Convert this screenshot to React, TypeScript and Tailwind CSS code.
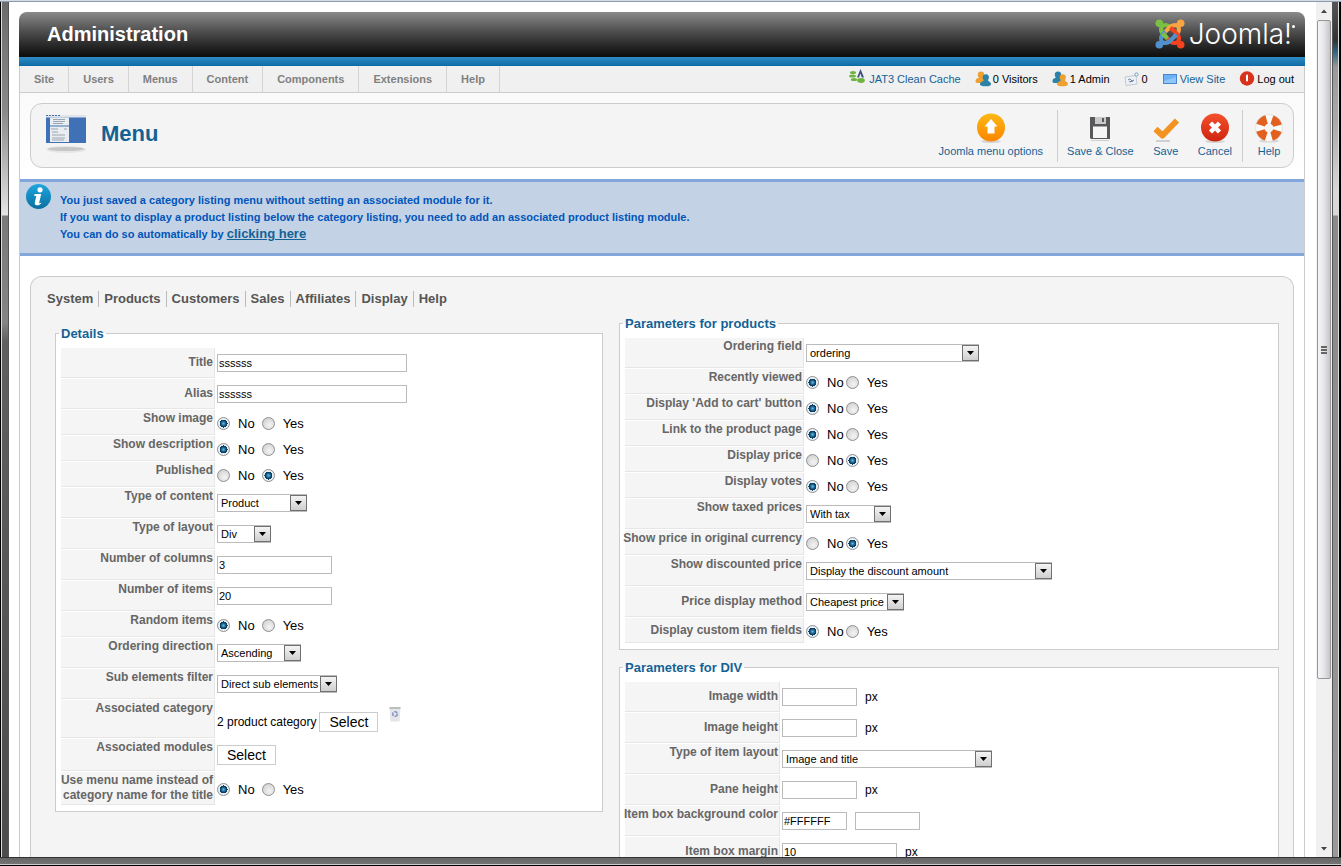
import { useId } from "react";

type Choice = "No" | "Yes";

const menuItems = ["Site", "Users", "Menus", "Content", "Components", "Extensions", "Help"];
const submenuItems = ["System", "Products", "Customers", "Sales", "Affiliates", "Display", "Help"];

const JoomlaMark = () => {
    const arms = [
        { color: "#7ac143", angle: 0 },
        { color: "#f9a541", angle: 90 },
        { color: "#f44321", angle: 180 },
        { color: "#5091cd", angle: 270 },
    ];
    return (
        <svg className="h-[30px] w-[30px]" viewBox="0 0 30 30" fill="none" aria-hidden="true">
            {arms.map(({ color, angle }) => (
                <g key={color} transform={`rotate(${angle} 15 15)`}>
                    <circle cx="4.3" cy="4.3" r="3.8" fill={color} />
                    <path d="M5 5 L8 6.5 C11 5.5 13 6 15 8 L17.500 10.500" stroke={color} strokeWidth="4" />
                    <path d="M5 5 L6.500 8 C5.5 11 6 13 8 15 L14.500 21.500" stroke={color} strokeWidth="4.2" />
                </g>
            ))}
            <path d="M7.500 14.500 L11.500 18.500" stroke="#7ac143" strokeWidth="4.2" />
        </svg>
    );
};

const CacheIcon = () => (
    <svg className="h-4 w-4" viewBox="0 0 16 16" aria-hidden="true">
        <g fill="#6cb33f">
            <ellipse cx="4" cy="4.5" rx="3" ry="1.6" />
            <ellipse cx="3.5" cy="8" rx="3.4" ry="1.6" />
            <ellipse cx="5" cy="11.5" rx="3.2" ry="1.6" />
            <ellipse cx="12" cy="12.5" rx="3.8" ry="2.4" />
        </g>
        <path d="M8 9.5 L11.5 1 L15 9.5 H12.8 L11.4 5.5 L10 9.5Z" fill="#3b4f80" />
    </svg>
);

const PeopleIcon = ({ back, front }: { back: string; front: string }) => (
    <svg className="h-4 w-4" viewBox="0 0 16 16" aria-hidden="true">
        <g fill={back}>
            <circle cx="6" cy="3.8" r="3.2" />
            <path d="M0.500 10 C0.500 7 4 7.5 4.200 5.5 H8 L10 9 V12 H2 C1 12 0.500 11 0.500 10Z" />
        </g>
        <g fill={front}>
            <circle cx="10.800" cy="6.4" r="3.1" />
            <path d="M5 13 C5 10.5 8.700 11 9 8.5 H12.7 C13 11 16 10.5 16 13 C16 15 14 15.200 10.8 15.200 C7.5 15.200 5 15 5 13Z" />
        </g>
    </svg>
);

const MailIcon = () => (
    <svg className="h-4 w-4" viewBox="0 0 16 16" aria-hidden="true">
        <path d="M1 6 L12 4.5 L13 13 L2 14.5Z" fill="#eef2f6" stroke="#c3c9cf" />
        <path d="M4 9 q2 -2 3 0 t3 0 M5 11 l4 -1" stroke="#5b7fa0" fill="none" />
        <circle cx="12.5" cy="3.5" r="1.6" fill="#fff" stroke="#6a9ccc" />
    </svg>
);

const ScreenIcon = () => (
    <svg className="h-4 w-4" viewBox="0 0 16 16" aria-hidden="true">
        <rect x="1.5" y="3.5" width="13" height="9" fill="#6db2f7" stroke="#4a86d0" />
        <path d="M2 10 L14 6 V12 H2Z" fill="#8fc6fb" />
    </svg>
);

const LogoutIcon = () => (
    <svg className="h-4 w-4" viewBox="0 0 16 16" aria-hidden="true">
        <circle cx="8" cy="7.500" r="7.2" fill="#d8321a" />
        <rect x="7" y="3.5" width="2" height="7" rx="1" fill="#fff" />
    </svg>
);

const MenuPageIcon = () => (
    <svg className="h-10 w-[42px]" viewBox="0 0 42 40" aria-hidden="true">
        <rect x="1" y="1" width="40" height="28" fill="#4070b5" />
        <rect x="1" y="1" width="40" height="2.5" fill="#dfe3ea" />
        <rect x="5" y="3.5" width="19" height="8" fill="#e9edf2" />
        <rect x="5" y="12.5" width="19" height="15.5" fill="#e9edf2" />
        <path d="M8 5.5h12M8 7.5h12M8 9.5h10M6 15h7M19 15h3M7 18h6M7 21h13M7 24h13M7 26h12" stroke="#9aa4b2" />
        <path d="M1 1.5h14" stroke="#4a6fa5" strokeDasharray="2 1" />
        <ellipse cx="21" cy="35" rx="18" ry="2" fill="#c6c6c6" />
        <ellipse cx="21" cy="35.5" rx="20" ry="3.5" fill="#c6c6c6" opacity="0.3" />
    </svg>
);

const OptionsIcon = () => (
    <svg className="h-8 w-8" viewBox="0 0 32 32" aria-hidden="true">
        <defs>
            <linearGradient id="orange" x1="0" y1="0" x2="0" y2="1">
                <stop offset="0" stopColor="#fdb813" />
                <stop offset="1" stopColor="#fb8500" />
            </linearGradient>
        </defs>
        <ellipse cx="16" cy="29.5" rx="10" ry="1.6" fill="#d6d6d6" />
        <circle cx="16" cy="15.5" r="14" fill="url(#orange)" />
        <path d="M16 7 L22.5 14.5 H19.5 V21.5 H12.5 V14.5 H9.5Z" fill="#fff" />
    </svg>
);

const FloppyIcon = () => (
    <svg className="h-8 w-8" viewBox="0 0 32 32" aria-hidden="true">
        <path d="M6 5 H26 V27 H7 L6 26Z" fill="#58585a" />
        <rect x="11" y="5" width="11" height="7" fill="#c9c9cb" />
        <rect x="18" y="6" width="2" height="4" fill="#58585a" />
        <rect x="9" y="14.5" width="14" height="11.5" fill="#f6f6f6" />
        <path d="M7 28.5h18" stroke="#d0d0d0" />
    </svg>
);

const CheckIcon = () => (
    <svg className="h-8 w-8" viewBox="0 0 32 32" aria-hidden="true">
        <path d="M6 29 H20" stroke="#cfcfcf" strokeWidth="2" />
        <path d="M5.500 17 L12.500 23.500 L27 8.500" stroke="#f39322" strokeWidth="6" strokeLinejoin="round" fill="none" />
    </svg>
);

const CancelIcon = () => (
    <svg className="h-8 w-8" viewBox="0 0 32 32" aria-hidden="true">
        <defs>
            <linearGradient id="red" x1="0" y1="0" x2="0" y2="1">
                <stop offset="0" stopColor="#f4512c" />
                <stop offset="1" stopColor="#cf2410" />
            </linearGradient>
        </defs>
        <ellipse cx="16" cy="29.5" rx="10" ry="1.6" fill="#d6d6d6" />
        <circle cx="16" cy="15.500" r="14" fill="url(#red)" />
        <path d="M11.500 11 L20.500 20 M20.500 11 L11.500 20" stroke="#fff" strokeWidth="4.500" />
    </svg>
);

const LifebuoyIcon = () => (
    <svg className="h-8 w-8" viewBox="0 0 32 32" aria-hidden="true">
        <ellipse cx="16" cy="29" rx="10" ry="1.6" fill="#d6d6d6" />
        <circle cx="16" cy="16" r="9" fill="none" stroke="#fafafa" strokeWidth="9" />
        <circle cx="16" cy="16" r="9" fill="none" stroke="#e2601f" strokeWidth="9" strokeDasharray="8.600 5.537" strokeDashoffset="-2.770" />
        <circle cx="16" cy="16" r="13.500" fill="none" stroke="#dcd5d0" strokeWidth="0.600" />
    </svg>
);

const InfoIcon = () => (
    <svg className="h-[26px] w-[26px] shrink-0" viewBox="0 0 26 26" aria-hidden="true">
        <defs>
            <linearGradient id="blue" x1="0" y1="0" x2="0" y2="1">
                <stop offset="0" stopColor="#1fa6df" />
                <stop offset="1" stopColor="#0a6f9f" />
            </linearGradient>
        </defs>
        <circle cx="12.500" cy="12.500" r="12.500" fill="url(#blue)" />
        <circle cx="14" cy="5.800" r="2.600" fill="#fff" />
        <path d="M8.500 10 H15.200 L13.200 18.500 C13 19.600 14 19.500 15.500 18.500 C14.500 22 8 22.500 8.800 18.500 L10.300 12 H8.300Z" fill="#fff" />
    </svg>
);

const TrashIcon = () => (
    <svg className="h-4 w-3" viewBox="0 0 12 16" aria-hidden="true">
        <path d="M0.500 1 H11.500 L10.500 15.500 H1.500Z" fill="#e3e5e8" />
        <path d="M0.500 1 H11.500 V3 H0.600Z" fill="#b9c0ba" />
        <circle cx="6" cy="8" r="2.300" fill="none" stroke="#8494c8" strokeWidth="1.500" strokeDasharray="3.500 1" />
    </svg>
);

const Row = ({ label, htmlFor, labelWidth, size = "h-[30px]", align = "items-start pt-px", children }: {
    label: string;
    htmlFor?: string;
    labelWidth: string;
    size?: string;
    align?: string;
    children: React.ReactNode;
}) => (
    <div className={`mb-px flex ${size}`}>
        <div className={`mr-0.5 flex shrink-0 justify-end border-r border-b border-[#e6e6e6] bg-[#f5f5f5] pr-px text-right ${labelWidth} ${align}`}>
            <label htmlFor={htmlFor} className="text-xs leading-[15px] font-bold whitespace-pre text-[#666]">{label}</label>
        </div>
        <div className="flex items-center">{children}</div>
    </div>
);

const inputStyle = "h-[18px] border border-[#bbb] bg-white px-px text-[11px] text-black";

const TextRow = ({ label, value = "", width, unit, align, labelWidth }: {
    label: string;
    value?: string;
    width: string;
    unit?: string;
    align?: string;
    labelWidth: string;
}) => {
    const id = useId();
    return (
        <Row label={label} htmlFor={id} align={align} labelWidth={labelWidth}>
            <input id={id} type="text" defaultValue={value} className={`${inputStyle} ${width}`} />
            {unit && <span className="ml-2 text-xs text-black">{unit}</span>}
        </Row>
    );
};

const SelectRow = ({ label, value, width, align, labelWidth }: {
    label: string;
    value: string;
    width: string;
    align?: string;
    labelWidth: string;
}) => {
    const id = useId();
    return (
        <Row label={label} htmlFor={id} align={align} labelWidth={labelWidth}>
            <div className={`relative ${width}`}>
                <select id={id} className="block h-[18px] w-full appearance-none border border-[#bbb] bg-white pl-[3px] text-[11px] text-black">
                    <option>{value}</option>
                </select>
                <span className="pointer-events-none absolute top-px right-0 flex h-4 w-[17px] items-center justify-center border border-[#707070] bg-linear-to-b from-[#f4f4f4] to-[#cfcfcf]">
                    <svg className="h-1 w-[7px]" viewBox="0 0 7 4" aria-hidden="true">
                        <path d="M0 0 H7 L3.5 4Z" fill="#000" />
                    </svg>
                </span>
            </div>
        </Row>
    );
};

const RadioRow = ({ label, value, gap = "ml-0.5", size = "h-[25px]", align, labelWidth }: {
    label: string;
    value: Choice;
    gap?: string;
    size?: string;
    align?: string;
    labelWidth: string;
}) => {
    const name = useId();
    const radio =
        "mr-2 size-[13px] appearance-none rounded-full border border-[#8e8f8f] bg-[radial-gradient(circle_at_60%_65%,#f4f4f4,#c9c9c9)] checked:bg-[radial-gradient(circle_at_50%_50%,#6bb8dd_0,#1c6a97_2px,#0c3f63_3px,#0c3f63_4px,#e8eef2_4px)]";
    return (
        <Row label={label} size={size} align={align} labelWidth={labelWidth}>
            <div role="radiogroup" aria-label={label} className="flex items-center pt-0.5 text-[13px] text-black">
                <label className="flex items-center">
                    <input type="radio" name={name} defaultChecked={value === "No"} className={radio} />
                    No
                </label>
                <label className={`flex items-center ${gap}`}>
                    <input type="radio" name={name} defaultChecked={value === "Yes"} className={radio} />
                    Yes
                </label>
            </div>
        </Row>
    );
};

const Panel = ({ title, className = "", children }: { title: string; className?: string; children: React.ReactNode }) => (
    <fieldset className={`border border-[#ccc] bg-white px-[5px] pb-[5px] ${className}`}>
        <legend className="-ml-0.5 px-0.5 text-[13px] leading-[15px] font-bold text-[#146295]">{title}</legend>
        <div className="pt-[7px]">{children}</div>
    </fieldset>
);

const selectButton = "h-5 border border-[#ccc] bg-white px-[9px] text-sm leading-[18px] text-black";

const Details = () => {
    const w = "w-[154px]";
    return (
        <Panel title="Details">
            <TextRow labelWidth={w} label="Title" value="ssssss" width="w-[190px]" align="items-center" />
            <TextRow labelWidth={w} label="Alias" value="ssssss" width="w-[190px]" align="items-center" />
            <RadioRow labelWidth={w} label="Show image" value="No" gap="ml-[7px]" />
            <RadioRow labelWidth={w} label="Show description" value="No" gap="ml-[7px]" />
            <RadioRow labelWidth={w} label="Published" value="Yes" gap="ml-[7px]" />
            <SelectRow labelWidth={w} label="Type of content" value="Product" width="w-[90px]" />
            <SelectRow labelWidth={w} label="Type of layout" value="Div" width="w-[54px]" />
            <TextRow labelWidth={w} label="Number of columns" value="3" width="w-[115px]" />
            <TextRow labelWidth={w} label="Number of items" value="20" width="w-[115px]" />
            <RadioRow labelWidth={w} label="Random items" value="No" gap="ml-[7px]" />
            <SelectRow labelWidth={w} label="Ordering direction" value="Ascending" width="w-[84px]" />
            <SelectRow labelWidth={w} label="Sub elements filter" value="Direct sub elements" width="w-[120px]" />
            <Row labelWidth={w} label="Associated category" htmlFor="category" size="h-[38px]">
                <div className="flex items-center pt-1.5">
                    <span className="text-xs text-black">2 product category</span>
                    <button id="category" type="button" className={`ml-[3px] ${selectButton}`}>Select</button>
                    <button type="button" aria-label="Delete" className="mb-4 ml-[11px]">
                        <TrashIcon />
                    </button>
                </div>
            </Row>
            <Row labelWidth={w} label="Associated modules" htmlFor="modules" size="h-8">
                <button id="modules" type="button" className={selectButton}>Select</button>
            </Row>
            <RadioRow
                labelWidth={w}
                label={"Use menu name instead of\ncategory name for the title"}
                value="No"
                gap="ml-[7px]"
                size="h-[33px]"
                align="items-center"
            />
        </Panel>
    );
};

const ProductParameters = () => {
    const w = "w-[179px]";
    return (
        <Panel title="Parameters for products">
            <SelectRow labelWidth={w} label="Ordering field" value="ordering" width="w-[173px]" />
            <RadioRow labelWidth={w} label="Recently viewed" value="No" />
            <RadioRow labelWidth={w} label="Display 'Add to cart' button" value="No" />
            <RadioRow labelWidth={w} label="Link to the product page" value="No" />
            <RadioRow labelWidth={w} label="Display price" value="Yes" />
            <RadioRow labelWidth={w} label="Display votes" value="No" />
            <SelectRow labelWidth={w} label="Show taxed prices" value="With tax" width="w-[85px]" />
            <RadioRow labelWidth={w} label="Show price in original currency" value="Yes" />
            <SelectRow labelWidth={w} label="Show discounted price" value="Display the discount amount" width="w-[246px]" />
            <SelectRow labelWidth={w} label="Price display method" value="Cheapest price" width="w-[98px]" align="items-center" />
            <RadioRow labelWidth={w} label="Display custom item fields" value="No" align="items-center" />
        </Panel>
    );
};

const DivParameters = () => {
    const w = "w-[155px]";
    return (
        <Panel title="Parameters for DIV" className="mt-2.5">
            <TextRow labelWidth={w} label="Image width" width="w-[75px]" unit="px" align="items-center" />
            <TextRow labelWidth={w} label="Image height" width="w-[75px]" unit="px" align="items-center" />
            <SelectRow labelWidth={w} label="Type of item layout" value="Image and title" width="w-[210px]" />
            <TextRow labelWidth={w} label="Pane height" width="w-[75px]" unit="px" align="items-center" />
            <Row labelWidth={w} label="Item box background color" htmlFor="color">
                <input id="color" type="text" defaultValue="#FFFFFF" className={`w-[65px] ${inputStyle}`} />
                <input type="text" aria-label="Color preview" className={`ml-2 w-[65px] ${inputStyle}`} />
            </Row>
            <TextRow labelWidth={w} label="Item box margin" value="10" width="w-[115px]" unit="px" align="items-center" />
        </Panel>
    );
};

const Header = () => (
    <header>
        <div className="flex h-[45px] items-center justify-between rounded-t-lg bg-linear-to-b from-[#8a8a8a] to-[#0c0c0c] pr-2.5 pb-0.5 pl-7 text-white">
            <h1 className="text-xl font-bold">Administration</h1>
            <div className="flex items-center gap-1">
                <JoomlaMark />
                <span className="flex font-['Inter',sans-serif] text-[28px] leading-[30px] font-light">
                    Joomla!
                    <span className="mt-1.5 size-[3px] rounded-full bg-white" />
                </span>
            </div>
        </div>
        <div className="h-[9px] bg-linear-to-b from-[#2e8bc4] to-[#0a6aa5]" />
        <div className="flex h-[27px] justify-between border border-t-0 border-[#ccc] bg-[#f0f0f0] pr-2.5 text-[11px]">
            <nav className="flex">
                {menuItems.map((item) => (
                    <a key={item} href="#" className="flex items-center border-r border-[#d4d4d4] px-3.5 font-bold text-[#808080]">
                        {item}
                    </a>
                ))}
            </nav>
            <div className="flex items-center gap-3.5 text-black">
                <a href="#" className="flex items-center gap-1 text-[#146295]">
                    <span className="pb-1.5"><CacheIcon /></span>
                    JAT3 Clean Cache
                </a>
                <span className="flex items-center gap-0.5"><PeopleIcon back="#f0a030" front="#2c82a8" />0 Visitors</span>
                <span className="flex items-center gap-0.5"><PeopleIcon back="#2c82a8" front="#f0a030" />1 Admin</span>
                <span className="flex items-center gap-0.5"><MailIcon />0</span>
                <a href="#" className="flex items-center gap-0.5 text-[#146295]"><ScreenIcon />View Site</a>
                <a href="#" className="flex items-center gap-0.5"><LogoutIcon />Log out</a>
            </div>
        </div>
    </header>
);

const ToolbarButton = ({ label, icon }: { label: string; icon: React.ReactNode }) => (
    <button type="button" className="flex flex-col items-center px-2 text-[11px] leading-[15px] whitespace-nowrap text-[#146295]">
        {icon}
        {label}
    </button>
);

const Toolbar = () => (
    <div className="flex h-[65px] items-center justify-between rounded-xl border border-[#ccc] bg-[#f4f4f4] pl-3.5">
        <div className="flex items-center gap-3.5 pb-1">
            <MenuPageIcon />
            <h2 className="text-[22px] leading-7 font-bold text-[#146295]">Menu</h2>
        </div>
        <div className="flex items-center">
            <ToolbarButton label="Joomla menu options" icon={<OptionsIcon />} />
            <div className="mr-px ml-1.5 h-[52px] w-px bg-[#ccc]" />
            <ToolbarButton label="Save & Close" icon={<FloppyIcon />} />
            <ToolbarButton label="Save" icon={<CheckIcon />} />
            <ToolbarButton label="Cancel" icon={<CancelIcon />} />
            <div className="mx-0.5 h-[52px] w-px bg-[#ccc]" />
            <ToolbarButton label="Help" icon={<LifebuoyIcon />} />
        </div>
    </div>
);

const Message = () => (
    <div className="flex gap-2 border-y-[3px] border-[#84a7db] bg-[#c3d2e5] pl-1.5">
        <div className="pt-0.5"><InfoIcon /></div>
        <p className="py-2.5 text-[11px] leading-[17px] font-bold text-[#0055bb]">
            You just saved a category listing menu without setting an associated module for it.
            <br />
            If you want to display a product listing below the category listing, you need to add an associated product listing module.
            <br />
            You can do so automatically by <a href="#" className="text-[13px] leading-none text-[#146295] underline">clicking here</a>
        </p>
    </div>
);

const Scrollbar = () => (
    <div className="flex w-4 shrink-0 flex-col items-center bg-[#f0f0f0]" aria-hidden="true">
        <svg className="h-[18px] w-2" viewBox="0 0 8 18">
            <path d="M1 11 L4 7.500 L7 11Z" fill="#444" />
        </svg>
        <div className="flex w-3.5 flex-[659] flex-col items-center justify-center gap-px rounded-[2px] border border-[#979797] bg-linear-to-r from-[#f5f5f5] via-[#e6e6e9] to-[#c4c4ca]">
            <span className="h-0.5 w-1.5 bg-[#666]" />
            <span className="h-0.5 w-1.5 bg-[#666]" />
            <span className="h-0.5 w-1.5 bg-[#666]" />
        </div>
        <div className="flex-[160]" />
        <svg className="h-[18px] w-2" viewBox="0 0 8 18">
            <path d="M1 8 L4 11.500 L7 8Z" fill="#444" />
        </svg>
    </div>
);

const App = () => {
    return (
        <div className="flex h-screen flex-col overflow-hidden bg-white font-['Liberation_Sans',Arial,sans-serif]">
            <div className="h-0.5 shrink-0 border-b border-[#8b9bb0] bg-[#d5dbe2]" />
            <div className="flex min-h-0 flex-1">
                <div className="w-[9px] shrink-0 border-r border-l border-r-[#555] border-l-black bg-[linear-gradient(to_bottom,#6c6c6c_0,#8a8a8a_110px,#d8d8d8_200px,#e4e4e4_213px,#7a7a7a_214px,#858585_320px,#606060_340px,#4c4c4c_100%)] shadow-[inset_1px_0_0_#ddd]" />
                <div className="min-w-0 flex-1 overflow-hidden pt-2.5 pr-[11px] pl-2.5">
                    <Header />
                    <main className="border-x border-[#ccc]">
                        <div className="bg-linear-to-b from-[#fafafa] to-white px-2.5 pt-2.5 pb-[11px]">
                            <Toolbar />
                        </div>
                        <Message />
                        <div className="px-2.5 pt-5">
                            <div className="rounded-t-xl border border-b-0 border-[#ccc] bg-[#f4f4f4] pt-3.5 pr-3.5 pb-10 pl-6">
                                <nav className="-ml-[13px] flex h-4 items-center text-[13px] leading-4 font-bold text-[#555]">
                                    {submenuItems.map((item) => (
                                        <a key={item} href="#" className="border-r border-[#bbb] px-[5px] last:border-r-0">
                                            {item}
                                        </a>
                                    ))}
                                </nav>
                                <div className="mt-[9px] grid grid-cols-[548fr_660fr] gap-4">
                                    <div className="pt-2.5">
                                        <Details />
                                    </div>
                                    <div>
                                        <ProductParameters />
                                        <DivParameters />
                                    </div>
                                </div>
                            </div>
                        </div>
                    </main>
                </div>
                <Scrollbar />
                <div className="w-[9px] shrink-0 border-r-2 border-l border-r-black border-l-[#555] bg-[linear-gradient(to_bottom,#555_0,#333_38px,#2f6684_50px,#999_65px,#aaa_120px,#d8d8d8_190px,#d8d8d8_213px,#8a8a8a_214px,#999_100%)] shadow-[inset_-1px_0_0_#ddd]" />
            </div>
            <div className="h-[9px] shrink-0 border-t border-b border-t-[#333] border-b-black bg-linear-to-b from-[#666] to-[#777] shadow-[inset_0_-1px_0_#ccc]" />
        </div>
    );
};

export default App;
